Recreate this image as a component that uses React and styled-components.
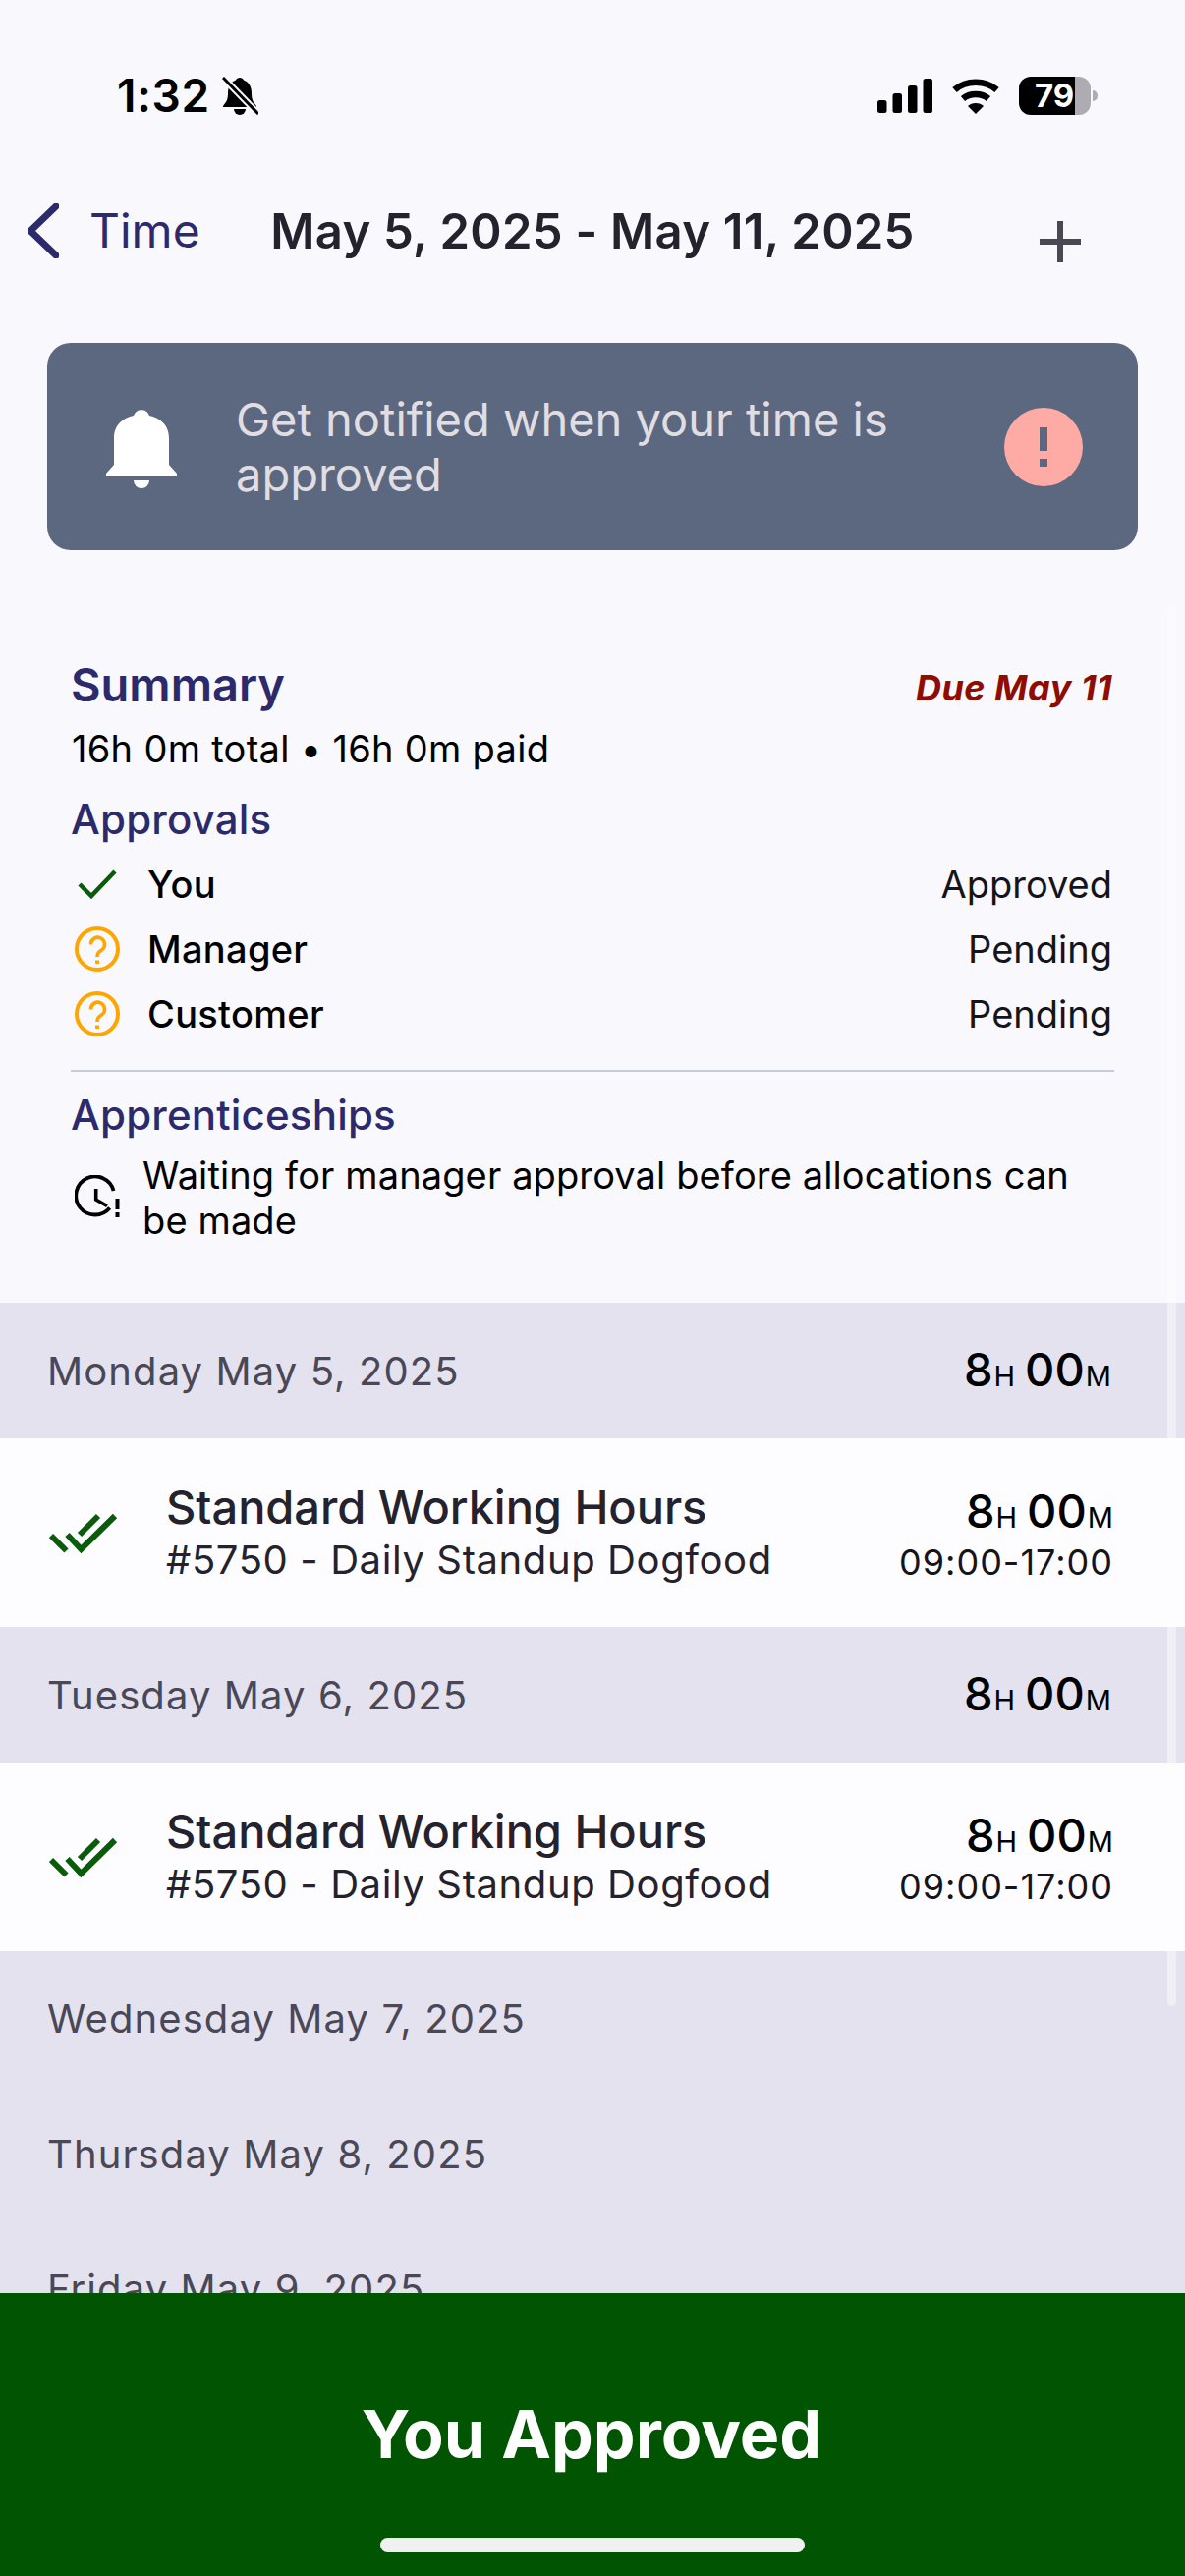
import React from "react";
import styled, { createGlobalStyle } from "styled-components";

const GlobalStyle = createGlobalStyle`
  html, body {
    margin: 0;
    padding: 0;
    background: #f8f8fd;
    font-family: "Inter", "Noto Sans", sans-serif;
  }
  * {
    box-sizing: border-box;
  }
`;

const Page = styled.div`
  position: relative;
  width: 1206px;
  height: 2622px;
  display: flex;
  flex-direction: column;
  overflow: hidden;
  background: #f8f8fd;
`;

// status bar
const StatusBar = styled.div`
  height: 190px;
  flex-shrink: 0;
  display: flex;
  justify-content: space-between;
  align-items: flex-start;
  padding: 78px 89px 0 119px;
`;

const StatusLeft = styled.div`
  display: flex;
  align-items: center;
  gap: 12px;
  height: 39px;
`;

const Clock = styled.span`
  font-size: 46px;
  font-weight: 600;
  line-height: 39px;
  letter-spacing: 0.7px;
  color: #000;
`;

const StatusRight = styled.div`
  display: flex;
  align-items: center;
  gap: 19px;
  height: 39px;
`;

const Battery = styled.div`
  position: relative;
  width: 73px;
  height: 39px;
  border-radius: 12px;
  padding-left: 16px;
  margin-right: 7px;
  background: linear-gradient(90deg, #000 78%, #aeabb3 78%);
  color: #fff;
  font-size: 33px;
  font-weight: 700;
  line-height: 39px;

  &::after {
    content: "";
    position: absolute;
    top: 14px;
    right: -7px;
    width: 5px;
    height: 11px;
    border-radius: 0 5px 5px 0;
    background: #aeabb3;
  }
`;

// nav
const Nav = styled.div`
  height: 90px;
  flex-shrink: 0;
  display: grid;
  grid-template-columns: 1fr auto 1fr;
  align-items: center;
`;

const BackLink = styled.div`
  display: flex;
  align-items: center;
  gap: 31px;
  padding-left: 28px;
  color: #2c2a6b;
  font-size: 48px;
  line-height: 56px;
`;

const NavTitle = styled.div`
  padding-top: 1px;
  font-size: 49px;
  font-weight: 600;
  line-height: 56px;
  letter-spacing: 0.27px;
  color: #24222c;
  white-space: nowrap;
`;

const PlusSlot = styled.div`
  justify-self: end;
  padding: 22px 106px 0 0;
  display: flex;
`;

// notification banner
const Banner = styled.div`
  flex-shrink: 0;
  height: 211px;
  margin: 69px 48px 0;
  padding: 0 56px 0 60px;
  display: flex;
  align-items: center;
  border-radius: 24px;
  background: #5c6880;
`;

const BannerText = styled.div`
  flex: 1;
  margin-left: 60px;
  font-size: 47px;
  line-height: 56px;
  color: #e0dee2;
`;

const AlertDot = styled.div`
  width: 80px;
  height: 80px;
  border-radius: 50%;
  background: #ffaba5;
  display: flex;
  align-items: center;
  justify-content: center;
`;

// summary card
const Summary = styled.div`
  flex-shrink: 0;
  padding: 108px 72px 61px;
`;

const SummaryHead = styled.div`
  display: flex;
  justify-content: space-between;
  align-items: center;
  height: 56px;
`;

const SummaryTitle = styled.div`
  font-size: 47px;
  font-weight: 600;
  color: #2c2a6b;
`;

const DueDate = styled.div`
  margin: 8px 2px 0 0;
  font-size: 36px;
  font-weight: 700;
  font-style: italic;
  letter-spacing: 0.5px;
  color: #8f0c00;
`;

const Totals = styled.div`
  margin: 15px 0 0 1px;
  font-size: 38px;
  line-height: 46px;
  letter-spacing: 0.3px;
  color: #000;
`;

const SectionLabel = styled.div`
  margin-top: ${(p) => p.$top}px;
  font-size: 42px;
  font-weight: 500;
  line-height: 48px;
  letter-spacing: 0.2px;
  color: #2c2a6b;
`;

const ApprovalList = styled.div`
  margin-top: 9px;
`;

const ApprovalRow = styled.div`
  height: 66px;
  display: flex;
  align-items: center;
  font-size: 38px;
`;

const ApprovalIcon = styled.div`
  width: 78px;
  padding-left: ${(p) => p.$inset}px;
  display: flex;
`;

const ApprovalName = styled.span`
  flex: 1;
  font-weight: 500;
  letter-spacing: 0.3px;
  color: #000;
`;

const ApprovalState = styled.span`
  margin-right: 2px;
  color: #15141a;
`;

const Divider = styled.div`
  height: 2px;
  margin-top: 24px;
  background: #c3cde0;
`;

const WaitingRow = styled.div`
  margin-top: 14px;
  display: flex;
  align-items: center;
`;

const WaitingIcon = styled.div`
  width: 73px;
  padding-left: 4px;
  flex-shrink: 0;
  display: flex;
`;

const WaitingText = styled.div`
  font-size: 38px;
  line-height: 46px;
  letter-spacing: 0.12px;
  color: #000;
`;

// day list
const DayList = styled.div`
  flex: 1;
  min-height: 0;
  overflow: hidden;
`;

const DayHeader = styled.div`
  height: ${(p) => (p.$empty ? 137.5 : 138)}px;
  padding: 0 75px 0 48px;
  display: flex;
  justify-content: space-between;
  align-items: center;
  background: #e4e2ee;
`;

const DayName = styled.span`
  font-size: 40px;
  letter-spacing: 1.1px;
  color: #4a4756;
`;

const EntryRow = styled.div`
  height: 192px;
  padding: 4px 75px 0 50px;
  display: flex;
  align-items: center;
  background: #fdfcfe;
`;

const EntryCheck = styled.div`
  width: 119px;
  flex-shrink: 0;
  display: flex;
  margin-bottom: 2px;
`;

const EntryText = styled.div`
  flex: 1;
`;

const EntryTitle = styled.div`
  font-size: 47px;
  font-weight: 500;
  line-height: 50px;
  letter-spacing: -0.05px;
  color: #24222c;
`;

const EntrySub = styled.div`
  padding-top: 2px;
  font-size: 40px;
  line-height: 54px;
  letter-spacing: 0.6px;
  color: #24222c;
`;

const EntryTimes = styled.div`
  display: flex;
  flex-direction: column;
  align-items: flex-end;
  padding-bottom: 8px;
  margin-right: -2px;
`;

const TimeRange = styled.div`
  font-size: 36px;
  line-height: 38px;
  letter-spacing: 1px;
  color: #15141a;
`;

const DurationWrap = styled.div`
  display: flex;
  align-items: baseline;
  padding-top: 4px;
  line-height: 52px;
  color: #000;
`;

const DurationNum = styled.span`
  font-size: 47px;
  font-weight: 500;
`;

const DurationUnit = styled.span`
  font-size: 29px;
  margin: 0 ${(p) => p.$gap}px 0 1px;
`;

// footer
const Footer = styled.div`
  flex-shrink: 0;
  height: 288px;
  padding: 100px 2px 0 0;
  position: relative;
  background: #015401;
  color: #fff;
  font-size: 68px;
  font-weight: 700;
  line-height: 86px;
  text-align: center;
`;

const HomeIndicator = styled.div`
  position: absolute;
  left: 387px;
  top: 249px;
  width: 432px;
  height: 15px;
  border-radius: 8px;
  background: #f0f0f0;
`;

const ScrollThumb = styled.div`
  position: absolute;
  left: 1188px;
  top: 617px;
  width: 9px;
  height: 1425px;
  border-radius: 5px;
  background: rgba(255, 255, 255, 0.45);
`;

// drawn icons
const BellOff = () => (
  <svg width="37" height="39" viewBox="0 0 37 39">
    <path
      d="M1 30 C4 26 6 24 6 17 C6 9 10 5 14 3.5 C15 0 21 0 22 3.5 C26 5 30 9 30 17 C30 24 32 26 35 30 V31 H1 Z"
      fill="#000"
    />
    <path d="M12 33 H24 A6 6 0 0 1 12 33 Z" fill="#000" />
    <path d="M1 1 L37 38" stroke="#f8f8fd" strokeWidth="7" />
    <path d="M1 1 L37 38" stroke="#000" strokeWidth="3" />
  </svg>
);

const Signal = () => (
  <svg width="56" height="35" viewBox="0 0 56 35" fill="#000">
    <rect x="0" y="22" width="9.5" height="13" rx="2.5" />
    <rect x="15.5" y="15" width="9.5" height="20" rx="2.5" />
    <rect x="31" y="7" width="9.5" height="28" rx="2.5" />
    <rect x="46.5" y="0" width="9.5" height="35" rx="2.5" />
  </svg>
);

const Wifi = () => (
  <svg width="50" height="36" viewBox="0 0 50 36" fill="none">
    <path d="M3.5 11.5 C15 1 35 1 46.5 11.5" stroke="#000" strokeWidth="6.5" />
    <path d="M12 20.5 C19 14.5 31 14.5 38 20.5" stroke="#000" strokeWidth="6.5" />
    <path d="M17 28 C21 24 29 24 33 28 L25 36 Z" fill="#000" />
  </svg>
);

const Chevron = () => (
  <svg width="32" height="56" viewBox="0 0 32 56" fill="none">
    <path
      d="M29 3 L3 28 L29 53"
      stroke="#2c2a6b"
      strokeWidth="7"
      strokeLinecap="round"
      strokeLinejoin="round"
    />
  </svg>
);

const Plus = () => (
  <svg width="42" height="42" viewBox="0 0 42 42" fill="#4a4953">
    <rect x="18" y="0" width="6" height="42" />
    <rect x="0" y="18" width="42" height="6" />
  </svg>
);

const BigBell = () => (
  <svg width="72" height="84" viewBox="8 9 72 84" fill="#fff">
    <path d="M8 81 V78 L16 69 V42 C16 28 26 21 36 19 A8.5 8.5 0 0 1 52 19 C62 21 72 28 72 42 V69 L80 78 V81 Z" />
    <path d="M36 85 H52 A8 8 0 0 1 36 85 Z" />
  </svg>
);

const Exclaim = () => (
  <svg width="8" height="40" viewBox="0 0 8 40" fill="#5c6880">
    <rect x="0" y="0" width="8" height="24" />
    <rect x="0" y="32" width="8" height="8" />
  </svg>
);

const Tick = () => (
  <svg width="40" height="30" viewBox="0 0 40 30" fill="none">
    <path d="M2 15 L14 27 L38 2" stroke="#0a5c0a" strokeWidth="4.5" />
  </svg>
);

const Question = () => (
  <svg width="46" height="46" viewBox="6 6 46 46" fill="none" stroke="#ffa500">
    <circle cx="29" cy="29" r="21" strokeWidth="4" />
    <path
      d="M22.5 24.5 a7 7 0 1 1 11 5.5 c-3 2 -4.5 3 -4.5 7"
      strokeWidth="3.6"
    />
    <rect x="27" y="40.5" width="4" height="3.5" fill="#ffa500" stroke="none" />
  </svg>
);

const ClockAlert = () => (
  <svg width="46" height="46" viewBox="6 6 46 46" fill="none" stroke="#000">
    <path
      d="M45.6 22 A19.5 19.5 0 1 0 41.7 39.5"
      strokeWidth="3.8"
    />
    <path d="M27.7 20 V31 L39 37.5" strokeWidth="3.6" />
    <rect x="47.5" y="30" width="4" height="11" fill="#000" stroke="none" />
    <rect x="47.5" y="44" width="4" height="5" fill="#000" stroke="none" />
  </svg>
);

const DoubleCheck = () => (
  <svg width="70" height="42" viewBox="10 10 70 42" fill="none" stroke="#0a5c0a" strokeWidth="6">
    <path d="M12 33 L27.5 48.5" />
    <path d="M28.5 32 L42.5 47 L77 13" />
    <path d="M41 32 L60 13" />
  </svg>
);

const Duration = () => (
  <DurationWrap>
    <DurationNum>8</DurationNum>
    <DurationUnit $gap={10}>H</DurationUnit>
    <DurationNum>00</DurationNum>
    <DurationUnit $gap={0}>M</DurationUnit>
  </DurationWrap>
);

const approvals = [
  { name: "You", state: "Approved", icon: <Tick />, inset: 7 },
  { name: "Manager", state: "Pending", icon: <Question />, inset: 4 },
  { name: "Customer", state: "Pending", icon: <Question />, inset: 4 },
];

const days = [
  { label: "Monday May 5, 2025", worked: true },
  { label: "Tuesday May 6, 2025", worked: true },
  { label: "Wednesday May 7, 2025" },
  { label: "Thursday May 8, 2025" },
  { label: "Friday May 9, 2025" },
];

export default function App() {
  return (
    <Page>
      <GlobalStyle />
      <StatusBar>
        <StatusLeft>
          <Clock>1:32</Clock>
          <BellOff />
        </StatusLeft>
        <StatusRight>
          <Signal />
          <Wifi />
          <Battery>79</Battery>
        </StatusRight>
      </StatusBar>

      <Nav>
        <BackLink>
          <Chevron />
          Time
        </BackLink>
        <NavTitle>May 5, 2025 - May 11, 2025</NavTitle>
        <PlusSlot>
          <Plus />
        </PlusSlot>
      </Nav>

      <Banner>
        <BigBell />
        <BannerText>Get notified when your time is approved</BannerText>
        <AlertDot>
          <Exclaim />
        </AlertDot>
      </Banner>

      <Summary>
        <SummaryHead>
          <SummaryTitle>Summary</SummaryTitle>
          <DueDate>Due May 11</DueDate>
        </SummaryHead>
        <Totals>16h 0m total • 16h 0m paid</Totals>
        <SectionLabel $top={25}>Approvals</SectionLabel>
        <ApprovalList>
          {approvals.map((a) => (
            <ApprovalRow key={a.name}>
              <ApprovalIcon $inset={a.inset}>{a.icon}</ApprovalIcon>
              <ApprovalName>{a.name}</ApprovalName>
              <ApprovalState>{a.state}</ApprovalState>
            </ApprovalRow>
          ))}
        </ApprovalList>
        <Divider />
        <SectionLabel $top={20}>Apprenticeships</SectionLabel>
        <WaitingRow>
          <WaitingIcon>
            <ClockAlert />
          </WaitingIcon>
          <WaitingText>
            Waiting for manager approval before allocations can be made
          </WaitingText>
        </WaitingRow>
      </Summary>

      <DayList>
        {days.map((d) => (
          <React.Fragment key={d.label}>
            <DayHeader $empty={!d.worked}>
              <DayName>{d.label}</DayName>
              {d.worked && <Duration />}
            </DayHeader>
            {d.worked && (
              <EntryRow>
                <EntryCheck>
                  <DoubleCheck />
                </EntryCheck>
                <EntryText>
                  <EntryTitle>Standard Working Hours</EntryTitle>
                  <EntrySub>#5750 - Daily Standup Dogfood</EntrySub>
                </EntryText>
                <EntryTimes>
                  <Duration />
                  <TimeRange>09:00-17:00</TimeRange>
                </EntryTimes>
              </EntryRow>
            )}
          </React.Fragment>
        ))}
      </DayList>

      <Footer>
        You Approved
        <HomeIndicator />
      </Footer>
      <ScrollThumb />
    </Page>
  );
}
